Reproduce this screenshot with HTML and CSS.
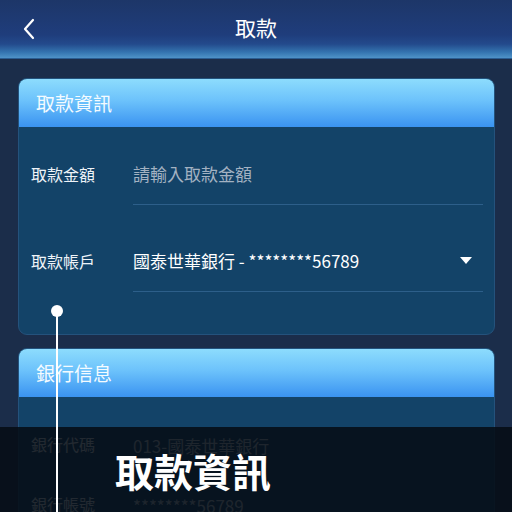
FILE: index.html
```html
<!DOCTYPE html>
<html lang="zh-Hant">
<head>
<meta charset="utf-8">
<link rel="stylesheet" href="styles.css">
</head>
<body>
<div class="screen">
  <header class="topbar">
    <svg class="back" width="14" height="22" viewBox="0 0 14 22"><polyline points="11,2 3,11 11,20" fill="none" stroke="#ffffff" stroke-width="2.2" stroke-linecap="round" stroke-linejoin="round"/></svg>
    <div class="title">取款</div>
  </header>
  <main class="content">
    <section class="card">
      <div class="card-head">取款資訊</div>
      <div class="card-body">
        <div class="row input-row">
          <div class="label">取款金額</div>
          <div class="value placeholder">請輸入取款金額</div>
        </div>
        <div class="row input-row">
          <div class="label">取款帳戶</div>
          <div class="value">國泰世華銀行 - ********56789<span class="caret"></span></div>
        </div>
      </div>
    </section>
    <section class="card">
      <div class="card-head">銀行信息</div>
      <div class="card-body">
        <div class="row info-row">
          <div class="label">銀行代碼</div>
          <div class="value dim">013-國泰世華銀行</div>
        </div>
        <div class="row info-row">
          <div class="label">銀行帳號</div>
          <div class="value dim">********56789</div>
        </div>
      </div>
    </section>
  </main>
  <div class="shade"></div>
  <div class="caption">取款資訊</div>
  <div class="pointer"><span class="dot"></span></div>
</div>
</body>
</html>
```
FILE: styles.css
```css
html, body {
  margin: 0;
  padding: 0;
}
body {
  width: 512px;
  height: 512px;
  overflow: hidden;
  background: #1b2d4a;
  font-family: "Noto Sans CJK TC", "Noto Sans", sans-serif;
  color: #ffffff;
}
.screen {
  position: relative;
  width: 512px;
  height: 512px;
  overflow: hidden;
  background: #1b2d4a;
}
.topbar {
  height: 58px;
  border-bottom: 1px solid #2a5d92;
  background: linear-gradient(to bottom, #1d3668 0%, #1f3d7c 60%, #234a8c 76%, #3474b0 90%, #4f93c8 100%);
  display: flex;
  align-items: center;
  justify-content: center;
  position: relative;
}
.back {
  position: absolute;
  left: 22px;
  top: 18px;
}
.title {
  font-size: 21px;
  line-height: 24px;
  color: #ffffff;
  margin-top: -4px;
}
.content {
  padding: 19px 17px 0 18px;
  display: flex;
  flex-direction: column;
  gap: 13px;
}
.card {
  background: #134368;
  border-radius: 9px;
  border: 1px solid #24527c;
  overflow: hidden;
}
.card-head {
  height: 48px;
  background: linear-gradient(to bottom, #8ddcfd 0%, #6cc2fb 45%, #3a93f1 100%);
  padding-left: 17px;
  font-size: 19px;
  line-height: 48px;
  color: #f4fbff;
}
.card-body {
  padding: 18px 11px 42px 12px;
  display: flex;
  flex-direction: column;
  gap: 27px;
}
.row {
  display: flex;
  align-items: center;
  height: 60px;
}
.label {
  width: 102px;
  font-size: 16px;
  color: #eef3f8;
  flex: none;
  margin-top: -2px;
}
.value {
  flex: 1;
  height: 60px;
  display: flex;
  align-items: center;
  font-size: 17px;
  color: #ffffff;
}
.input-row .value {
  border-bottom: 1px solid #2d5f8a;
  box-sizing: border-box;
  height: 60px;
  padding-bottom: 2px;
}
.placeholder {
  color: #a3b2c2;
}
.caret {
  margin-left: auto;
  margin-right: 11px;
  width: 0;
  height: 0;
  border-left: 6px solid transparent;
  border-right: 6px solid transparent;
  border-top: 7px solid #ffffff;
}
.card:nth-child(2) .card-body {
  gap: 0;
}
.dim {
  color: #c9d4df;
}
.shade {
  position: absolute;
  left: 0;
  right: 0;
  top: 427px;
  bottom: 0;
  background: rgba(6, 12, 20, 0.88);
}
.caption {
  position: absolute;
  left: 115px;
  top: 445px;
  font-size: 39px;
  line-height: 50px;
  font-weight: 700;
  color: #ffffff;
}
.pointer {
  position: absolute;
  left: 56px;
  top: 311px;
  width: 2px;
  height: 201px;
  background: #ffffff;
}
.dot {
  position: absolute;
  left: -5px;
  top: -6px;
  width: 12px;
  height: 12px;
  border-radius: 50%;
  background: #ffffff;
}
```
